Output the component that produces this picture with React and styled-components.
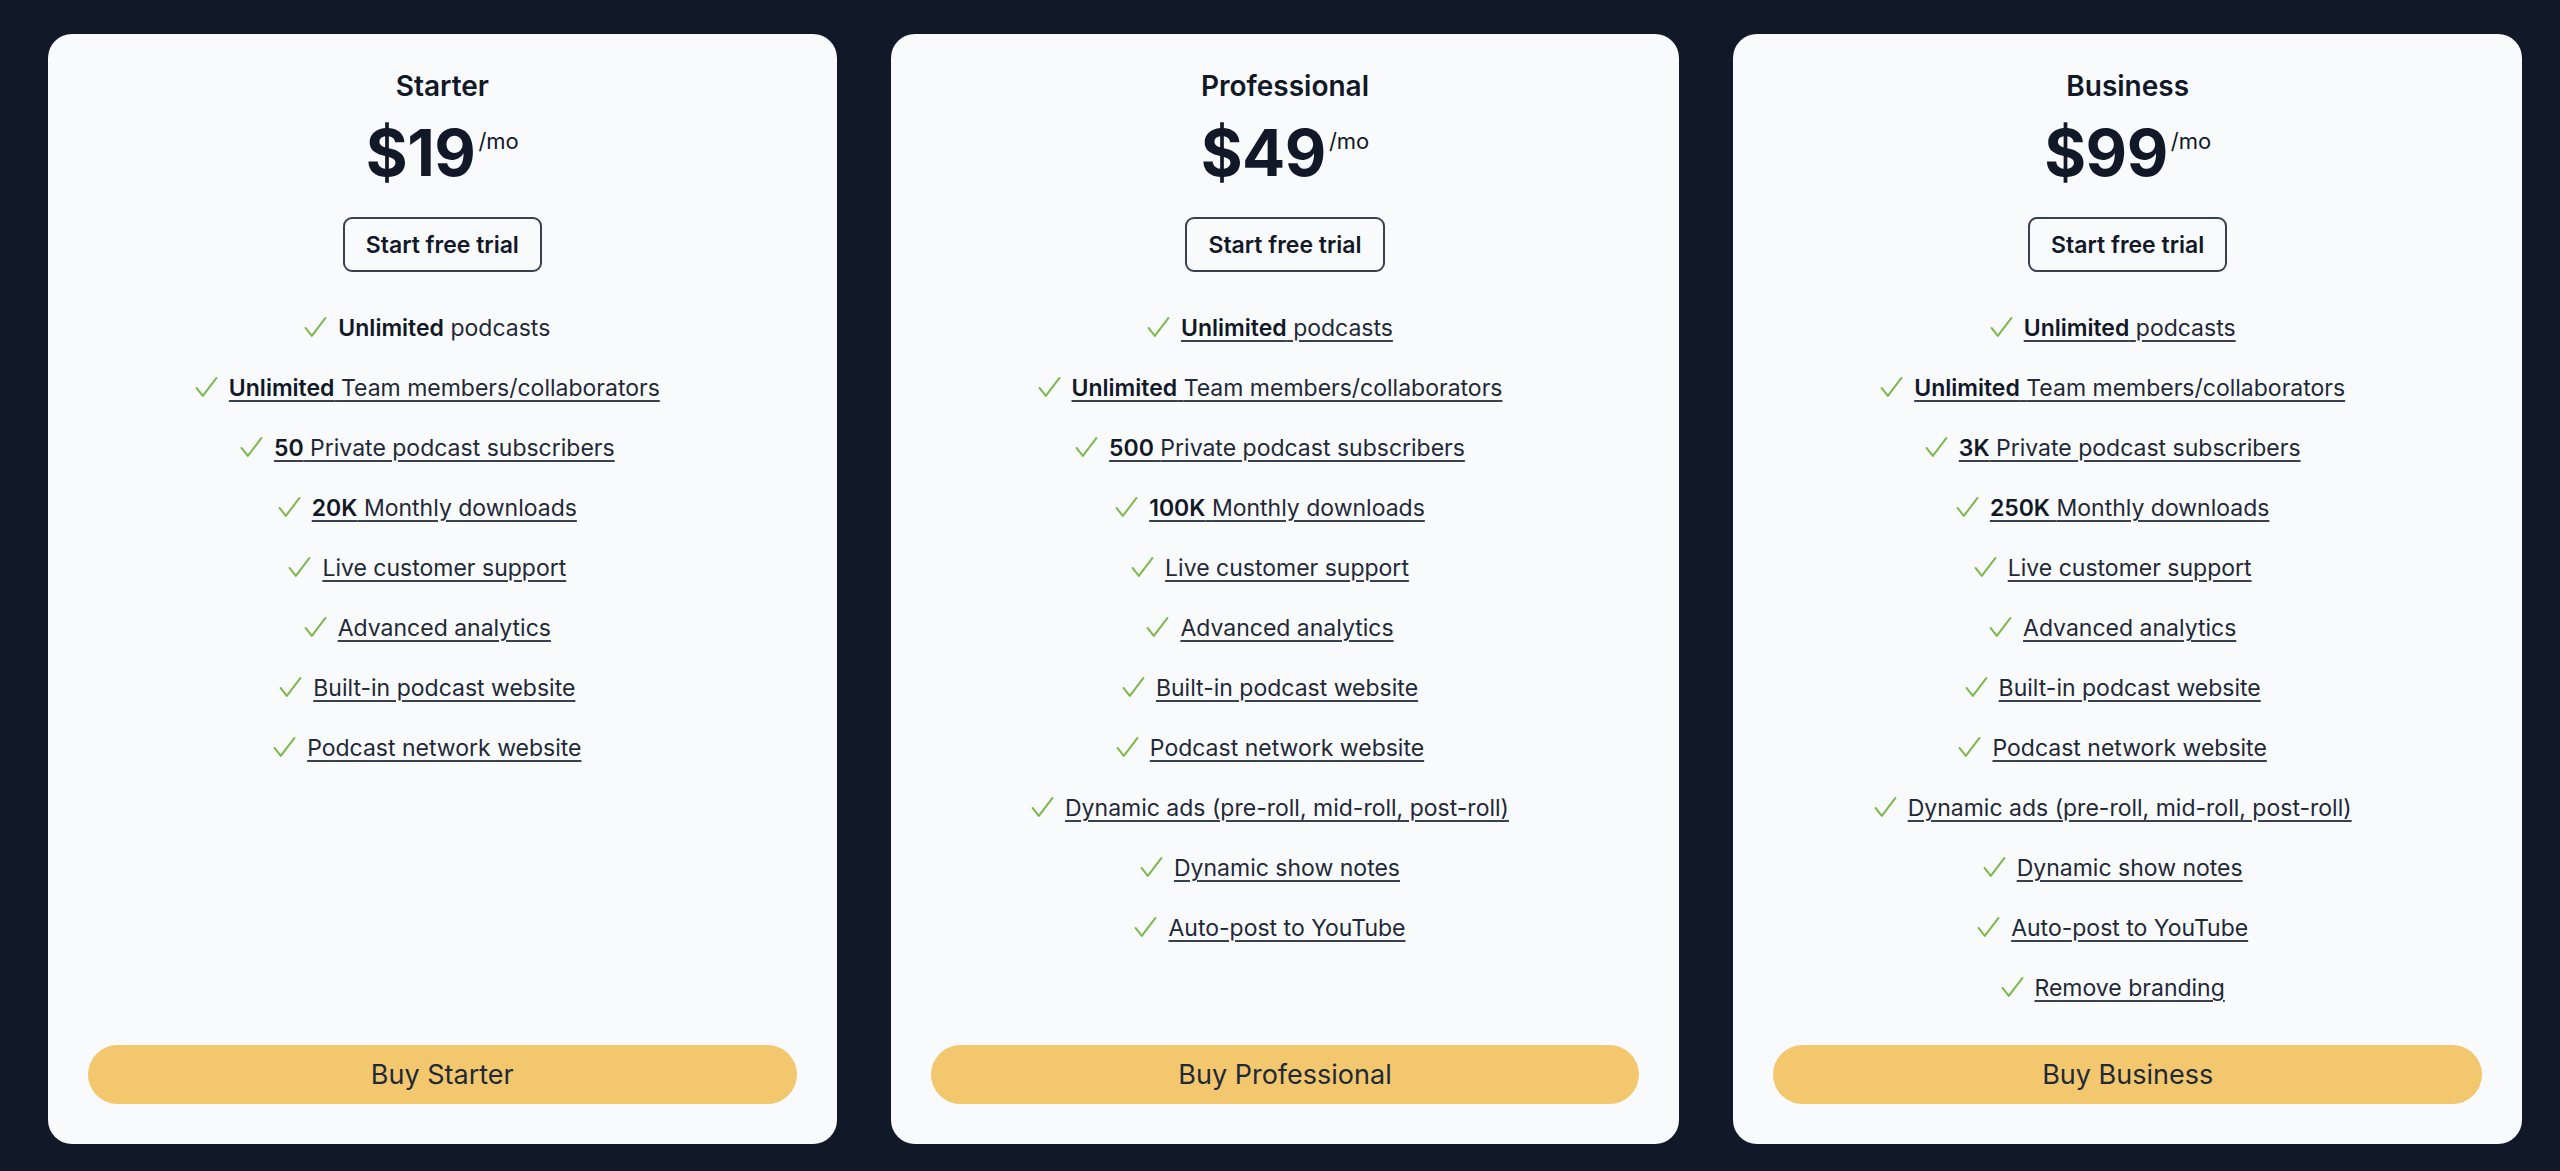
import React from 'react'
import styled, { createGlobalStyle } from 'styled-components'

const GlobalStyle = createGlobalStyle`
    html, body {
        margin: 0;
        padding: 0;
        background: #111827;
    }
    body {
        font-family: Inter, "Noto Sans", "Liberation Sans", sans-serif;
        color: #111827;
    }
`

const plans = [
    {
        name: 'Starter',
        price: 19,
        features: [
            { strong: 'Unlimited', text: 'podcasts', plain: true },
            { strong: 'Unlimited', text: 'Team members/collaborators' },
            { strong: '50', text: 'Private podcast subscribers' },
            { strong: '20K', text: 'Monthly downloads' },
            { text: 'Live customer support' },
            { text: 'Advanced analytics' },
            { text: 'Built-in podcast website' },
            { text: 'Podcast network website' },
        ],
    },
    {
        name: 'Professional',
        price: 49,
        features: [
            { strong: 'Unlimited', text: 'podcasts' },
            { strong: 'Unlimited', text: 'Team members/collaborators' },
            { strong: '500', text: 'Private podcast subscribers' },
            { strong: '100K', text: 'Monthly downloads' },
            { text: 'Live customer support' },
            { text: 'Advanced analytics' },
            { text: 'Built-in podcast website' },
            { text: 'Podcast network website' },
            { text: 'Dynamic ads (pre-roll, mid-roll, post-roll)' },
            { text: 'Dynamic show notes' },
            { text: 'Auto-post to YouTube' },
        ],
    },
    {
        name: 'Business',
        price: 99,
        features: [
            { strong: 'Unlimited', text: 'podcasts' },
            { strong: 'Unlimited', text: 'Team members/collaborators' },
            { strong: '3K', text: 'Private podcast subscribers' },
            { strong: '250K', text: 'Monthly downloads' },
            { text: 'Live customer support' },
            { text: 'Advanced analytics' },
            { text: 'Built-in podcast website' },
            { text: 'Podcast network website' },
            { text: 'Dynamic ads (pre-roll, mid-roll, post-roll)' },
            { text: 'Dynamic show notes' },
            { text: 'Auto-post to YouTube' },
            { text: 'Remove branding' },
        ],
    },
]

//GREEN CHECK MARKER, HANGS LEFT OF THE CENTERED TEXT
const CheckIcon = () => (
    <Marker width='23' height='21' viewBox='0 0 23 21' fill='none'>
        <path d='M1.5 11.5 L7.8 19.5 L21.5 1.5' stroke='#7db84f' strokeWidth='2' strokeLinecap='round' strokeLinejoin='round' />
    </Marker>
)

const PlanCard = ({ plan }) => (
    <Card>
        <Title>{plan.name}</Title>
        <PriceRow>
            <Amount>${plan.price}</Amount>
            <Period>/mo</Period>
        </PriceRow>
        <TrialButton>Start free trial</TrialButton>
        <FeatureList>
            {plan.features.map((f, i) => (
                <Feature key={i}>
                    <FeatureText $plain={f.plain}>
                        <CheckIcon />
                        {f.strong && <strong>{f.strong}</strong>}
                        {f.strong ? ' ' : ''}
                        {f.text}
                    </FeatureText>
                </Feature>
            ))}
        </FeatureList>
        <BuyButton>Buy {plan.name}</BuyButton>
    </Card>
)

const App = () => {
    return (
        <>
            <GlobalStyle />
            <Page>
                {plans.map(p => <PlanCard key={p.name} plan={p} />)}
            </Page>
        </>
    )
}

export default App

const Page = styled.div`
    display: grid;
    grid-template-columns: repeat(3, 1fr);
    gap: 54px;
    padding: 34px 38px 27px 48px;
    min-height: 100vh;
    box-sizing: border-box;
`

const Card = styled.div`
    display: flex;
    flex-direction: column;
    align-items: center;
    background: #f9fafb;
    border-radius: 24px;
    padding: 35px 40px 40px;
`

const Title = styled.h2`
    margin: 0;
    font-size: 28px;
    line-height: 34px;
    font-weight: 600;
    color: #111827;
`

const PriceRow = styled.div`
    display: flex;
    align-items: flex-start;
    margin-top: 18px;
`

const Amount = styled.span`
    font-size: 64px;
    line-height: 64px;
    font-weight: 700;
    letter-spacing: -0.5px;
    color: #111827;
`

const Period = styled.span`
    font-size: 22px;
    line-height: 22px;
    margin-top: 9px;
    margin-left: 3px;
    color: #111827;
`

const TrialButton = styled.button`
    margin-top: 32px;
    height: 55px;
    padding: 0 21px;
    border: 2px solid #374151;
    border-radius: 9px;
    background: transparent;
    font-family: inherit;
    font-size: 23px;
    font-weight: 600;
    color: #111827;
`

const FeatureList = styled.ul`
    list-style: none;
    margin: 26px 0 0;
    padding: 0 0 0 4px;
    display: flex;
    flex-direction: column;
    align-items: center;
    flex: 1;
`

const Feature = styled.li`
    display: flex;
    align-items: center;
    height: 60px;
`

const FeatureText = styled.span`
    position: relative;
    font-size: 23px;
    color: #1f2937;
    text-decoration: ${p => (p.$plain ? 'none' : 'underline')};
    text-decoration-thickness: 1.5px;
    text-underline-offset: 4px;
    text-decoration-color: #374151;

    & strong {
        font-weight: 600;
        color: #111827;
    }
`

const Marker = styled.svg`
    position: absolute;
    right: calc(100% + 11px);
    top: 50%;
    transform: translateY(-55%);
`

const BuyButton = styled.button`
    align-self: stretch;
    height: 59px;
    border: none;
    border-radius: 999px;
    background: #f2c76e;
    font-family: inherit;
    font-size: 27px;
    font-weight: 400;
    color: #1f2937;
`
